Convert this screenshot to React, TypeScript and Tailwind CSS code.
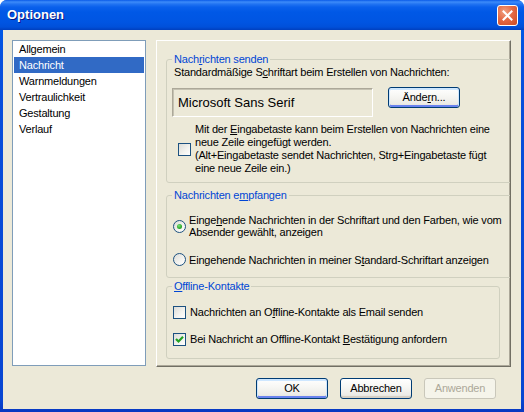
import React from "react";

function U({ children }: { children: React.ReactNode }) {
  return <span className="underline underline-offset-[1px]">{children}</span>;
}

function CheckBox({ checked }: { checked?: boolean }) {
  return (
    <span className="w-[13px] h-[13px] shrink-0 border border-[#1C5180] bg-[linear-gradient(135deg,#DCDCD7_0%,#F4F4F0_60%,#FFFFFF_100%)] flex items-center justify-center">
      {checked && (
        <svg width="11" height="11" viewBox="0 0 11 11">
          <polyline points="2,5 4.5,7.5 9,2.8" fill="none" stroke="#21A121" strokeWidth="2.2" />
        </svg>
      )}
    </span>
  );
}

function Radio({ checked }: { checked?: boolean }) {
  return (
    <span className="w-[13px] h-[13px] shrink-0 rounded-full border border-[#1C5180] bg-[linear-gradient(135deg,#DCDCD7_0%,#F4F4F0_60%,#FFFFFF_100%)] flex items-center justify-center">
      {checked && (
        <span className="w-[5px] h-[5px] rounded-full bg-[radial-gradient(circle_at_40%_35%,#7FE07B_0%,#2FAF2F_55%,#1E8F1E_100%)]" />
      )}
    </span>
  );
}

function Group({
  title,
  className,
  children,
}: {
  title: React.ReactNode;
  className: string;
  children: React.ReactNode;
}) {
  return (
    <div className={"relative shrink-0 border border-[#D0D0BF] rounded-[3px] " + className}>
      <span className="absolute top-[-7px] left-[5px] px-[2px] bg-[#ECE9D8] text-[#0046D5] leading-[13px] whitespace-nowrap">
        {title}
      </span>
      {children}
    </div>
  );
}

function Button({
  children,
  variant = "normal",
}: {
  children: React.ReactNode;
  variant?: "normal" | "default" | "disabled";
}) {
  const base =
    "w-[72px] h-[21px] rounded-[3px] border flex items-center justify-center leading-[13px] text-[11px]";
  if (variant === "disabled") {
    return (
      <div className={base + " border-[#C9C7BA] bg-[#F5F4EA] text-[#ACA899]"}>{children}</div>
    );
  }
  const shadow =
    variant === "default"
      ? " shadow-[inset_0_1px_0_1px_#CEE7FF,inset_0_-1px_0_1px_#6982EE]"
      : " shadow-[inset_0_-2px_0_#D6D0C5,inset_0_1px_0_#FFFFFF]";
  return (
    <div
      className={
        base +
        " border-[#003C74] bg-[linear-gradient(180deg,#FFFFFF_0%,#F7F7F4_40%,#ECEBE6_85%,#D6D0C5_100%)] text-black" +
        shadow
      }
    >
      {children}
    </div>
  );
}

export default function App() {
  const items = ["Allgemein", "Nachricht", "Warnmeldungen", "Vertraulichkeit", "Gestaltung", "Verlauf"];
  return (
    <div className="w-[524px] h-[412px] bg-white font-['Liberation_Sans',Arial,sans-serif] text-[11px] tracking-[-0.2px] text-black">
      <div className="w-[524px] h-[412px] flex flex-col rounded-t-[7px] overflow-hidden bg-[linear-gradient(180deg,#0A5AE8_0px,#0058E6_30px,#0850DD_60px,#0846D2_400px,#0838C0_412px)]">
        {/* Title bar */}
        <div className="h-[30px] shrink-0 flex items-center pl-[7px] pr-[6px] bg-[linear-gradient(180deg,#0A5AE8_0px,#3D8BF9_2px,#2274F2_4px,#0A60EC_7px,#0058E6_12px,#0055E2_22px,#0050DA_27px,#003FBE_30px)]">
          <span className="text-white font-bold text-[13px] tracking-normal leading-[16px] [text-shadow:1px_1px_0_#0A1883]">
            Optionen
          </span>
          <div className="ml-auto w-[21px] h-[21px] rounded-[3px] border border-white bg-[radial-gradient(circle_at_35%_30%,#F0A080_0%,#E46A45_45%,#CC4A22_100%)] flex items-center justify-center">
            <svg width="13" height="13" viewBox="0 0 13 13">
              <path d="M2.5 2.5 L10.5 10.5 M10.5 2.5 L2.5 10.5" stroke="white" strokeWidth="2" strokeLinecap="square" />
            </svg>
          </div>
        </div>

        {/* Client area */}
        <div className="flex-1 mx-[3px] mb-[3px] bg-[#ECE9D8] flex flex-col pl-[9px] pt-[10px]">
          <div className="flex gap-[10px]">
            {/* List box */}
            <div className="w-[134px] h-[326px] shrink-0 border border-[#7F9DB9] bg-white">
              {items.map((it, i) => (
                <div
                  key={it}
                  className={
                    "h-[16px] leading-[16px] mx-[1px] pl-[5px] whitespace-nowrap " +
                    (i === 1 ? "bg-[#316AC5] text-white" : "")
                  }
                >
                  {it}
                </div>
              ))}
            </div>

            {/* Panel */}
            <div className="w-[355px] h-[327px] shrink-0 border border-t-white border-l-white border-r-[#716F64] border-b-[#716F64] shadow-[inset_-1px_-1px_0_#ACA899] overflow-hidden pt-[18px] pl-[9px] flex flex-col">
              {/* Group 1 */}
              <Group
                className="w-[352px] h-[124px] pt-[6px] pl-[5px]"
                title={
                  <>
                    Nach<U>r</U>ichten senden
                  </>
                }
              >
                <div className="ml-[2px] leading-[13px] whitespace-nowrap">
                  Standardmäßige S<U>c</U>hriftart beim Erstellen von Nachrichten:
                </div>
                <div className="flex mt-[9px]">
                  <div className="w-[201px] h-[29px] border border-t-[#ACA899] border-l-[#ACA899] border-r-white border-b-white shadow-[inset_1px_1px_0_#C5C2B2] flex items-center pl-[5px] text-[13px] tracking-normal leading-[15px] whitespace-nowrap">
                    Microsoft Sans Serif
                  </div>
                  <div className="ml-[15px] mt-[-1px]">
                    <Button variant="default">
                      Ände<U>r</U>n...
                    </Button>
                  </div>
                </div>
                <div className="flex items-center mt-[6px] ml-[6px]">
                  <CheckBox />
                  <div className="ml-[4px] leading-[13px] whitespace-nowrap">
                    Mit der <U>E</U>ingabetaste kann beim Erstellen von Nachrichten eine
                    <br />
                    neue Zeile eingefügt werden.
                    <br />
                    (Alt+Eingabetaste sendet Nachrichten, Strg+Eingabetaste fügt
                    <br />
                    eine neue Zeile ein.)
                  </div>
                </div>
              </Group>

              {/* Group 2 */}
              <Group
                className="w-[352px] h-[83px] mt-[12px] pt-[18px] pl-[6px]"
                title={
                  <>
                    Nachrichten e<U>m</U>pfangen
                  </>
                }
              >
                <div className="flex items-center">
                  <Radio checked />
                  <div className="ml-[3px] leading-[12px] whitespace-nowrap">
                    Einge<U>h</U>ende Nachrichten in der Schriftart und den Farben, wie vom
                    <br />
                    Absender gewählt, anzeigen
                  </div>
                </div>
                <div className="flex items-center mt-[15px]">
                  <Radio />
                  <div className="ml-[3px] leading-[12px] whitespace-nowrap">
                    Eingehende Nachrichten in meiner S<U>t</U>andard-Schriftart anzeigen
                  </div>
                </div>
              </Group>

              {/* Group 3 */}
              <Group
                className="w-[334px] h-[73px] mt-[8px] pt-[19px] pl-[6px]"
                title={
                  <>
                    <U>O</U>ffline-Kontakte
                  </>
                }
              >
                <div className="flex items-center h-[13px]">
                  <CheckBox />
                  <div className="ml-[4px] leading-[13px] whitespace-nowrap">
                    Nachrichten an O<U>f</U>fline-Kontakte als Email senden
                  </div>
                </div>
                <div className="flex items-center h-[13px] mt-[14px]">
                  <CheckBox checked />
                  <div className="ml-[4px] leading-[13px] whitespace-nowrap">
                    Bei Nachricht an Offline-Kontakt <U>B</U>estätigung anfordern
                  </div>
                </div>
              </Group>
            </div>
          </div>

          {/* Buttons */}
          <div className="flex justify-end gap-[12px] mt-[11px] pr-[25px]">
            <Button variant="default">OK</Button>
            <Button>Abbrechen</Button>
            <Button variant="disabled">Anwenden</Button>
          </div>
        </div>
      </div>
    </div>
  );
}
